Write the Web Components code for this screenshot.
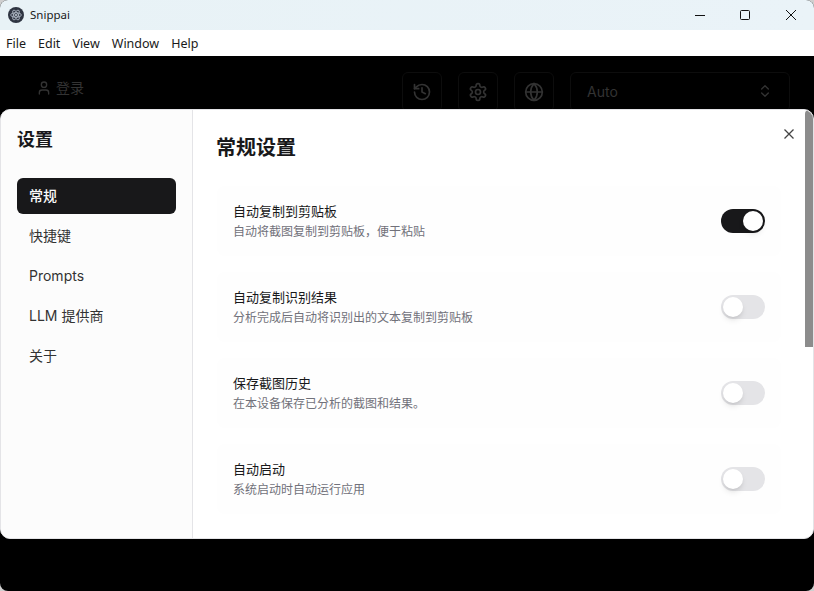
<!DOCTYPE html>
<html lang="zh">
<head>
<meta charset="utf-8">
<title>Snippai</title>
<style>
html, body { margin: 0; height: 100%; background: #cfcfcf; overflow: hidden; }
body { font-family: "Inter", "Noto Sans CJK SC", sans-serif; }
</style>
</head>
<body>
<snip-app></snip-app>
<script>
const SANS = '"Inter", "Noto Sans CJK SC", sans-serif';

class SnipTitlebar extends HTMLElement {
  constructor() {
    super();
    this.attachShadow({ mode: 'open' }).innerHTML = `
<style>
:host { display: flex; align-items: center; height: 30px; background: linear-gradient(90deg, #e8f2f6, #eaf3f8); padding: 0 1px 0 8px; box-sizing: border-box; }
.name { font: 11.5px "Noto Sans", ${SANS}; color: #1a1a1a; margin: 0 0 2px 6px; flex: 1; }
.btn { width: 45px; height: 30px; display: flex; align-items: center; justify-content: center; }
svg { display: block; }
</style>
<svg width="16" height="16" viewBox="0 0 16 16">
  <circle cx="8" cy="8" r="8" fill="#2f3542"/>
  <g fill="none" stroke="#b9c3d0" stroke-width=".8">
    <ellipse cx="8" cy="8" rx="5.4" ry="2.2"/>
    <ellipse cx="8" cy="8" rx="5.4" ry="2.2" transform="rotate(60 8 8)"/>
    <ellipse cx="8" cy="8" rx="5.4" ry="2.2" transform="rotate(120 8 8)"/>
  </g>
  <circle cx="8" cy="8" r="1" fill="#c9d2dc"/>
</svg>
<span class="name">Snippai</span>
<div class="btn"><svg width="12" height="12" viewBox="0 0 12 12"><path d="M0 6.5h10" stroke="#111" fill="none"/></svg></div>
<div class="btn"><svg width="12" height="12" viewBox="0 0 12 12"><rect x=".5" y="1.5" width="9" height="9" rx="1" stroke="#111" fill="none"/></svg></div>
<div class="btn"><svg width="12" height="12" viewBox="0 0 12 12"><path d="M1 1l10 10M11 1L1 11" stroke="#111" fill="none"/></svg></div>`;
  }
}

class SnipMenubar extends HTMLElement {
  constructor() {
    super();
    this.attachShadow({ mode: 'open' }).innerHTML = `
<style>
:host { display: flex; align-items: center; gap: 12px; height: 26px; background: #fff; padding: 0 6px; box-sizing: border-box; font: 12.5px "Noto Sans", ${SANS}; color: #1a1a1a; }
</style>
<span>File</span><span>Edit</span><span>View</span><span>Window</span><span>Help</span>`;
  }
}

class SnipTopbar extends HTMLElement {
  constructor() {
    super();
    this.attachShadow({ mode: 'open' }).innerHTML = `
<style>
:host { display: flex; align-items: center; height: 40px; margin-top: 16px; padding: 0 24px 0 36px; font-family: ${SANS}; color: #333; }
.login { display: flex; align-items: center; gap: 4px; font-size: 14px; flex: 1; margin-top: -9px; }
.login span { margin-top: -2px; }
.ico { width: 40px; height: 40px; box-sizing: border-box; border: 1px solid #0d0d0d; border-radius: 6px; margin-right: 16px; display: flex; align-items: center; justify-content: center; }
.ico svg { margin-left: -1px; }
.sel { width: 220px; height: 40px; box-sizing: border-box; border: 1px solid #0d0d0d; border-radius: 6px; display: flex; align-items: center; justify-content: space-between; padding: 0 16px 2px 16px; font-size: 14px; }
svg { display: block; fill: none; stroke: #333; stroke-width: 2; stroke-linecap: round; stroke-linejoin: round; }
</style>
<div class="login">
  <svg width="16" height="16" viewBox="0 0 24 24"><path d="M19 21v-2a4 4 0 0 0-4-4H9a4 4 0 0 0-4 4v2"/><circle cx="12" cy="7" r="4"/></svg>
  <span>登录</span>
</div>
<div class="ico"><svg width="20" height="20" viewBox="0 0 24 24"><path d="M3 12a9 9 0 1 0 9-9 9.75 9.75 0 0 0-6.74 2.74L3 8"/><path d="M3 3v5h5"/><path d="M12 7v5l4 2"/></svg></div>
<div class="ico"><svg width="20" height="20" viewBox="0 0 24 24"><path d="M12.22 2h-.44a2 2 0 0 0-2 2v.18a2 2 0 0 1-1 1.73l-.43.25a2 2 0 0 1-2 0l-.15-.08a2 2 0 0 0-2.73.73l-.22.38a2 2 0 0 0 .73 2.73l.15.1a2 2 0 0 1 1 1.72v.51a2 2 0 0 1-1 1.74l-.15.09a2 2 0 0 0-.73 2.73l.22.38a2 2 0 0 0 2.73.73l.15-.08a2 2 0 0 1 2 0l.43.25a2 2 0 0 1 1 1.73V20a2 2 0 0 0 2 2h.44a2 2 0 0 0 2-2v-.18a2 2 0 0 1 1-1.73l.43-.25a2 2 0 0 1 2 0l.15.08a2 2 0 0 0 2.73-.73l.22-.39a2 2 0 0 0-.73-2.73l-.15-.08a2 2 0 0 1-1-1.74v-.5a2 2 0 0 1 1-1.74l.15-.09a2 2 0 0 0 .73-2.73l-.22-.38a2 2 0 0 0-2.73-.73l-.15.08a2 2 0 0 1-2 0l-.43-.25a2 2 0 0 1-1-1.73V4a2 2 0 0 0-2-2z"/><circle cx="12" cy="12" r="3"/></svg></div>
<div class="ico"><svg width="20" height="20" viewBox="0 0 24 24"><circle cx="12" cy="12" r="10"/><path d="M12 2a14.5 14.5 0 0 0 0 20 14.5 14.5 0 0 0 0-20"/><path d="M2 12h20"/></svg></div>
<div class="sel"><span>Auto</span><svg width="16" height="16" viewBox="0 0 24 24"><path d="m7 15 5 5 5-5"/><path d="m7 9 5-5 5 5"/></svg></div>`;
  }
}

class SnipNavItem extends HTMLElement {
  constructor() {
    super();
    this.attachShadow({ mode: 'open' }).innerHTML = `
<style>
:host { display: flex; align-items: center; height: 36px; padding: 0 12px 2px; border-radius: 6px; font-size: 14px; color: #333; box-sizing: border-box; }
:host([active]) { background: #18181a; color: #fafafa; font-weight: 500; }
</style>
<slot></slot>`;
  }
}

class SnipSidebar extends HTMLElement {
  constructor() {
    super();
    this.attachShadow({ mode: 'open' }).innerHTML = `
<style>
:host { display: block; width: 192px; flex: none; box-sizing: border-box; background: #fcfcfc; border-right: 1px solid #e4e4e7; padding: 17px 16px 0 16px; font-family: ${SANS}; }
h2 { margin: 0 0 26px; font-size: 18px; line-height: 25px; font-weight: 600; color: #18181a; }
nav { display: flex; flex-direction: column; gap: 4px; }
</style>
<h2>设置</h2>
<nav><slot></slot></nav>`;
  }
}

class SnipToggle extends HTMLElement {
  constructor() {
    super();
    this.attachShadow({ mode: 'open' }).innerHTML = `
<style>
:host { display: flex; width: 44px; height: 24px; box-sizing: border-box; padding: 2px; border-radius: 12px; background: #e4e4e7; flex: none; }
:host([on]) { background: #18181a; justify-content: flex-end; }
i { display: block; width: 20px; height: 20px; border-radius: 50%; background: #fff; box-shadow: 0 4px 6px -1px rgba(0,0,0,.1), 0 2px 4px -2px rgba(0,0,0,.1); }
</style>
<i></i>`;
  }
}

class SnipSetting extends HTMLElement {
  constructor() {
    super();
    this.attachShadow({ mode: 'open' }).innerHTML = `
<style>
:host { display: flex; align-items: center; justify-content: space-between; height: 70px; padding: 0 16px; border-radius: 8px; background: #fefefe; font-family: ${SANS}; }
.txt { margin-top: 1px; }
.t { font-size: 13px; line-height: 19px; color: #18181a; }
.d { font-size: 12px; line-height: 18px; color: #71717a; margin-top: 2px; }
</style>
<div class="txt">
  <div class="t"><slot name="title"></slot></div>
  <div class="d"><slot name="desc"></slot></div>
</div>
<slot></slot>`;
  }
}

class SnipModal extends HTMLElement {
  constructor() {
    super();
    this.attachShadow({ mode: 'open' }).innerHTML = `
<style>
:host { position: absolute; left: 0; right: 0; top: 109px; height: 430px; box-sizing: border-box; display: flex; background: #fff; border: 1px solid #e4e4e7; border-radius: 10px; overflow: hidden; font-family: ${SANS}; }
.main { flex: 1; padding: 24px 32px 0 24px; min-width: 0; }
h1 { margin: 0 0 24px -1px; font-size: 20px; line-height: 28px; font-weight: 600; color: #18181a; }
.list { display: flex; flex-direction: column; gap: 16px; }
.close { position: absolute; top: 17px; right: 17px; display: block; }
.bar { position: absolute; top: 0; right: 0; width: 8px; height: 237px; background: #8c8c8c; border-radius: 4px 4px 0 0; }
</style>
<slot name="side"></slot>
<div class="main">
  <h1><slot name="heading"></slot></h1>
  <div class="list"><slot></slot></div>
</div>
<svg class="close" width="14" height="14" viewBox="0 0 14 14"><path d="M2.5 2.5l9 9M11.5 2.5l-9 9" stroke="#444" stroke-width="1.3" fill="none"/></svg>
<div class="bar"></div>`;
  }
}

class SnipApp extends HTMLElement {
  constructor() {
    super();
    this.attachShadow({ mode: 'open' }).innerHTML = `
<style>
:host { display: block; height: 591px; position: relative; background: #000; border-radius: 8px; overflow: hidden; }
</style>
<snip-titlebar></snip-titlebar>
<snip-menubar></snip-menubar>
<snip-topbar></snip-topbar>
<snip-modal>
  <snip-sidebar slot="side">
    <snip-nav-item active>常规</snip-nav-item>
    <snip-nav-item>快捷键</snip-nav-item>
    <snip-nav-item>Prompts</snip-nav-item>
    <snip-nav-item>LLM 提供商</snip-nav-item>
    <snip-nav-item>关于</snip-nav-item>
  </snip-sidebar>
  <span slot="heading">常规设置</span>
  <snip-setting>
    <span slot="title">自动复制到剪贴板</span>
    <span slot="desc">自动将截图复制到剪贴板，便于粘贴</span>
    <snip-toggle on></snip-toggle>
  </snip-setting>
  <snip-setting>
    <span slot="title">自动复制识别结果</span>
    <span slot="desc">分析完成后自动将识别出的文本复制到剪贴板</span>
    <snip-toggle></snip-toggle>
  </snip-setting>
  <snip-setting>
    <span slot="title">保存截图历史</span>
    <span slot="desc">在本设备保存已分析的截图和结果。</span>
    <snip-toggle></snip-toggle>
  </snip-setting>
  <snip-setting>
    <span slot="title">自动启动</span>
    <span slot="desc">系统启动时自动运行应用</span>
    <snip-toggle></snip-toggle>
  </snip-setting>
</snip-modal>`;
  }
}

customElements.define('snip-titlebar', SnipTitlebar);
customElements.define('snip-menubar', SnipMenubar);
customElements.define('snip-topbar', SnipTopbar);
customElements.define('snip-nav-item', SnipNavItem);
customElements.define('snip-sidebar', SnipSidebar);
customElements.define('snip-toggle', SnipToggle);
customElements.define('snip-setting', SnipSetting);
customElements.define('snip-modal', SnipModal);
customElements.define('snip-app', SnipApp);
</script>
</body>
</html>
